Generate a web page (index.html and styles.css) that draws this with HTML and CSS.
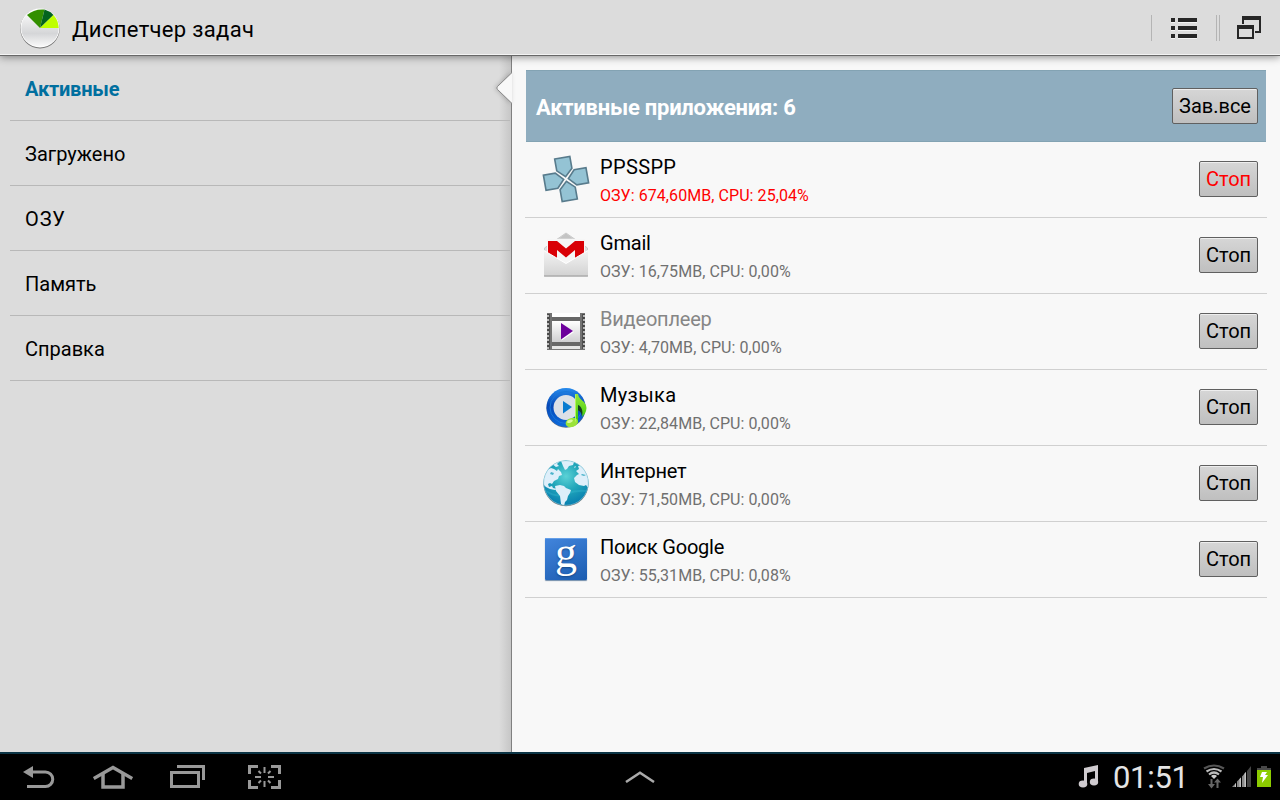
FILE: index.html
```
<!DOCTYPE html>
<html lang="ru">
<head>
    <meta charset="UTF-8">
    <meta name="viewport" content="width=device-width, initial-scale=1.0">
    <title>Диспетчер задач</title>
    <link rel="stylesheet" href="styles.css">
</head>
<body>
    <div class="screen">
        <header class="action-bar">
            <svg class="app-icon" width="44" height="44" viewBox="0 0 44 44">
                <defs>
                    <linearGradient id="disc" x1="0" y1="0" x2="0" y2="1">
                        <stop offset="0" stop-color="#fff"/>
                        <stop offset=".65" stop-color="#d5d6d8"/>
                        <stop offset="1" stop-color="#fafafa"/>
                    </linearGradient>
                </defs>
                <circle cx="22" cy="22.8" r="19.7" fill="#777"/>
                <circle cx="22" cy="22" r="19.5" fill="#fff"/>
                <circle cx="22" cy="22" r="18.7" fill="url(#disc)"/>
                <path d="M22 22L9 9Q16 2.700 26.500 3.500Z" fill="#338f00"/>
                <path d="M22 22L26.500 3.500Q32 5 35.500 9Z" fill="#04641e"/>
                <path d="M22 22L35.500 9Q40.500 14.500 40.700 22Z" fill="#bfff00"/>
            </svg>
            <h1 class="title">Диспетчер задач</h1>
            <div class="actions">
                <div class="action action-list">
                    <svg width="26" height="21" viewBox="0 0 26 21">
                        <path d="M0 4.500h4M7 4.500h19M0 12.500h4M7 12.500h19M0 20.500h4M7 20.500h19" stroke="#f4f4f4"/>
                        <path d="M0 0h4v4H0zM7 0h19v4H7zM0 8h4v4H0zM7 8h19v4H7zM0 16h4v4H0zM7 16h19v4H7z" fill="#262626"/>
                    </svg>
                </div>
                <div class="action action-windows">
                    <svg width="24" height="23" viewBox="0 0 24 23" fill="#262626">
                        <path d="M5 0h19v17h-6v-2h4V4H7v4H5z"/>
                        <path d="M0 9h17v14H0zM2 13v8h13v-8z" fill-rule="evenodd"/>
                    </svg>
                </div>
            </div>
        </header>

        <div class="content">
            <nav class="sidebar">
                <div class="menu-item selected">Активные</div>
                <div class="menu-item">Загружено</div>
                <div class="menu-item acronym">ОЗУ</div>
                <div class="menu-item">Память</div>
                <div class="menu-item">Справка</div>
                <svg class="pointer" width="17" height="34" viewBox="0 0 17 34">
                    <path d="M17 1.500L2.500 15.500Q1 17 2.500 18.500L17 32.500" fill="#f8f8f8" stroke="#858585"/>
                </svg>
            </nav>

            <main class="panel">
                <div class="panel-header">
                    <h2 class="panel-title">Активные приложения: 6</h2>
                    <button class="btn btn-all">Зав.все</button>
                </div>

                <div class="app-row">
                    <svg class="icon" width="48" height="48" viewBox="0 0 48 48">
                        <g transform="translate(24 24) scale(.96) rotate(-10) translate(-24 -24)" fill="#94c3d4" stroke="#587b8c" stroke-width="1.700">
                            <path d="M16 1.500h16V14L24 21.500L16 14Z"/>
                            <path d="M16 1.500h16V14L24 21.500L16 14Z" transform="rotate(90 24 24)"/>
                            <path d="M16 1.500h16V14L24 21.500L16 14Z" transform="rotate(180 24 24)"/>
                            <path d="M16 1.500h16V14L24 21.500L16 14Z" transform="rotate(270 24 24)"/>
                        </g>
                    </svg>
                    <div class="info">
                        <div class="name wide">PPSSPP</div>
                        <div class="usage alert">ОЗУ: 674,60MB, CPU: 25,04%</div>
                    </div>
                    <button class="btn alert">Стоп</button>
                </div>

                <div class="app-row">
                    <svg class="icon" width="48" height="48" viewBox="0 0 48 48">
                        <defs>
                            <linearGradient id="paper" x1="0" y1="0" x2="0" y2="1">
                                <stop offset="0" stop-color="#f4f4f4"/>
                                <stop offset="1" stop-color="#d2d2d2"/>
                            </linearGradient>
                        </defs>
                        <path d="M2.500 17L24 2L45.500 17V45H2.500Z" fill="#dedede" stroke="#cacaca"/>
                        <path d="M17 7.500L24 2.500L31 7.500Z" fill="#c4c4c4"/>
                        <path d="M5 8h38v25H5z" fill="#f6f6f6"/>
                        <path d="M6 10h9l9 7.500l9-7.500h9v17H33V19L24 26.500L15 19v8H6z" fill="#d90006"/>
                        <path d="M2 19.500L24 32.500L46 19.500V45H2Z" fill="url(#paper)"/>
                        <path d="M2 19.500L24 32.500L46 19.500" fill="none" stroke="#fff"/>
                        <path d="M2 45h44" stroke="#999"/>
                    </svg>
                    <div class="info">
                        <div class="name">Gmail</div>
                        <div class="usage">ОЗУ: 16,75MB, CPU: 0,00%</div>
                    </div>
                    <button class="btn">Стоп</button>
                </div>

                <div class="app-row">
                    <svg class="icon" width="48" height="48" viewBox="0 0 48 48">
                        <defs>
                            <linearGradient id="film" x1="0" y1="0" x2="0" y2="1">
                                <stop offset="0" stop-color="#fff"/>
                                <stop offset="1" stop-color="#cfcfd1"/>
                            </linearGradient>
                        </defs>
                        <path d="M10 6h28v4H10z" fill="#fff"/>
                        <path d="M5 6h5v37H5zM38 6h5v37h-5z" fill="#737373"/>
                        <path d="M10 10h28v4H10zM10 35h28v4H10z" fill="#686868"/>
                        <path d="M10 14h28v21H10z" fill="url(#film)"/>
                        <path d="M10 39h28v3H10z" fill="#e6e6e6"/>
                        <path d="M10 42.500h28" stroke="#777"/>
                        <path d="M6.500 7v35M41.500 7v35" stroke="#444" stroke-width="2.500"/>
                        <path d="M6 8v34M42 8v34" stroke="#ddd" stroke-width="1.500" stroke-dasharray="2 2"/>
                        <path d="M19.500 17.500L32 25L19.500 33.500Z" fill="#fff"/>
                        <path d="M19 16L31 24L19 32.500Z" fill="#6d009c"/>
                    </svg>
                    <div class="info">
                        <div class="name inactive">Видеоплеер</div>
                        <div class="usage">ОЗУ: 4,70MB, CPU: 0,00%</div>
                    </div>
                    <button class="btn">Стоп</button>
                </div>

                <div class="app-row">
                    <svg class="icon" width="48" height="48" viewBox="0 0 48 48">
                        <defs>
                            <linearGradient id="ring" x1="0" y1="0" x2="0" y2="1">
                                <stop offset="0" stop-color="#278bed"/>
                                <stop offset=".45" stop-color="#0749b7"/>
                                <stop offset="1" stop-color="#0c6bdd"/>
                            </linearGradient>
                            <linearGradient id="note" x1="0" y1="0" x2="0" y2="1">
                                <stop offset="0" stop-color="#9ae83a"/>
                                <stop offset="1" stop-color="#2fc805"/>
                            </linearGradient>
                        </defs>
                        <circle cx="24" cy="25.300" r="19.500" fill="#596c88"/>
                        <circle cx="24" cy="24.500" r="19.500" fill="url(#ring)"/>
                        <circle cx="24" cy="24.500" r="16" fill="none" stroke="#1977d9"/>
                        <circle cx="24" cy="24.500" r="12.500" fill="#dce0e7"/>
                        <path d="M21 18L30 24L21 30.500Z" fill="#087bd0"/>
                        <path d="M35 20c5 2 8 7 5 13c-1-4-2-5-5-6z" fill="#123d20"/>
                        <path d="M33 11h3c.5 6 8.500 7 8.500 14c0 3.500-2 6.500-4.500 9c1.500-6-.5-11-4-12v18h-3z" fill="url(#note)"/>
                        <ellipse cx="29.800" cy="39.500" rx="6.300" ry="4.500" fill="#9be33a" transform="rotate(-18 29.800 39.500)"/>
                        <ellipse cx="28" cy="38.300" rx="3" ry="1.500" fill="#dcfaa0" transform="rotate(-18 28 38.300)"/>
                        <path d="M33.500 11.500v27" stroke="#b5f25c"/>
                    </svg>
                    <div class="info">
                        <div class="name wide">Музыка</div>
                        <div class="usage">ОЗУ: 22,84MB, CPU: 0,00%</div>
                    </div>
                    <button class="btn">Стоп</button>
                </div>

                <div class="app-row">
                    <svg class="icon" width="48" height="48" viewBox="0 0 48 48">
                        <defs>
                            <radialGradient id="sea" cx=".5" cy=".35" r=".65">
                                <stop offset="0" stop-color="#5bd2d6"/>
                                <stop offset=".5" stop-color="#20a5b9"/>
                                <stop offset="1" stop-color="#087eb0"/>
                            </radialGradient>
                            <clipPath id="globe"><circle cx="24" cy="24" r="22.500"/></clipPath>
                        </defs>
                        <circle cx="24" cy="24.800" r="22.500" fill="#777"/>
                        <circle cx="24" cy="24" r="22.500" fill="url(#sea)"/>
                        <path d="M4 32Q14 39 24 35T44 32" fill="none" stroke="#38bad0" stroke-opacity=".35" stroke-width="2"/>
                        <g clip-path="url(#globe)" fill="#deeffa">
                            <path d="M1 18L5 11L9 9l3 1l3 2l1-2l3 3l1 3l-3 1l-1 3l-4 2l-2 3l-2-1l-2 1l1 3l3-1l1 2l4 1l-2 1l-5-1l-4-2l-3-3l-2 2z"/>
                            <path d="M19 2h5l2-1l6 2l-1 3l-4 1l-2 3l-2 1l-2-4z"/>
                            <path d="M10 5l4-3l3 1l-2 2l2 2l-3 1z"/>
                            <path d="M13 27l5-1l4 1l2 2l5 2l-1 3l-2 3l-1 4l-2 2l-1 4l-3-2l-1-8l-4-5z"/>
                            <path d="M34 12l3-2l-1-3l4-1l7 8v16l-3-4l-2 1l-5-1l-4-3l-1-4l3-3l2-1z"/>
                            <path d="M32 8l2-1l-1 2z"/>
                            <path d="M40 15l4 1l-2 1l-3-1zM9 13l3 1l-1 2l-3-1z" fill="#4bb3ca"/>
                        </g>
                        <circle cx="24" cy="24" r="22.300" fill="none" stroke="#8dcadb" stroke-opacity=".6"/>
                    </svg>
                    <div class="info">
                        <div class="name">Интернет</div>
                        <div class="usage">ОЗУ: 71,50MB, CPU: 0,00%</div>
                    </div>
                    <button class="btn">Стоп</button>
                </div>

                <div class="app-row">
                    <div class="icon">
                        <div class="google-tile">g</div>
                    </div>
                    <div class="info">
                        <div class="name">Поиск Google</div>
                        <div class="usage">ОЗУ: 55,31MB, CPU: 0,08%</div>
                    </div>
                    <button class="btn">Стоп</button>
                </div>
            </main>
        </div>

        <footer class="system-bar">
            <div class="nav-buttons">
                <svg width="32" height="22" viewBox="0 0 32 22">
                    <path d="M9 6H22.500A7.200 7.200 0 0 1 22.500 20.500H4" fill="none" stroke="#999" stroke-width="3"/>
                    <path d="M0 6L10 0V12Z" fill="#999"/>
                </svg>
                <svg width="40" height="24" viewBox="0 0 40 24" fill="none" stroke="#999">
                    <path d="M.7 13.500L20 2.500L39.300 13.500" stroke-width="3.500"/>
                    <path d="M10 9V22H30V9" stroke-width="3.500"/>
                </svg>
                <svg width="35" height="23" viewBox="0 0 35 23" fill="none" stroke="#999">
                    <path d="M7 1.500H33.500V15" stroke-width="3"/>
                    <path d="M1.500 7.500H28.500V21.500H1.500Z" stroke-width="3"/>
                </svg>
                <svg width="33" height="24" viewBox="0 0 33 24" fill="none" stroke="#999">
                    <path d="M1.500 9V1.500H10M23 1.500H31.500V9M31.500 15V22.500H23M10 22.500H1.500V15" stroke-width="3"/>
                    <path d="M16.500 2v6M16.500 16v6M7 12h6M20 12h6" stroke-width="2"/>
                    <path d="M10.500 6l2.500 2.500M22.500 6L20 8.500M10.500 18l2.500-2.500M22.500 18L20 15.500" stroke-width="2"/>
                </svg>
            </div>
            <svg class="tray-arrow" width="30" height="12" viewBox="0 0 30 12">
                <path d="M1 11L15 1.700L29 11" fill="none" stroke="#aaa" stroke-width="2.500"/>
            </svg>
            <div class="status">
                <svg class="music" width="21" height="23" viewBox="0 0 21 23" fill="#cfcbcf">
                    <path d="M6 3L20 0V17H17V6L9 8V19H6Z"/>
                    <ellipse cx="5" cy="19" rx="4.300" ry="3.400"/>
                    <ellipse cx="16" cy="17" rx="4.200" ry="3.400"/>
                </svg>
                <div class="clock">01:51</div>
                <svg class="wifi" width="22" height="25" viewBox="0 0 22 25" fill="none" stroke-width="2.200">
                    <path d="M1 4.500Q11-1.500 21 4.500" stroke="#555"/>
                    <path d="M3.500 7.500Q11 2.500 18.500 7.500M6 10.500Q11 6.500 16 10.500" stroke="#bbb"/>
                    <path d="M8 12Q11 9.500 14 12L11 15Z" fill="#ccc"/>
                    <path d="M8.500 15V22M14.500 24V17" stroke="#666" stroke-width="2"/>
                    <path d="M5 20h7L8.500 24.500ZM11 18.500h7L14.500 14.500Z" fill="#666"/>
                </svg>
                <svg class="signal" width="19" height="21" viewBox="0 0 19 21">
                    <path d="M0 21L4 17V21ZM5 21V15.500L9 11.500V21ZM10 21V10.500L14 6V21Z" fill="#888"/>
                    <path d="M3 21V18L4 17V21ZM7.500 21V13L9 11.500V21ZM12.500 21V7.500L14 6V21Z" fill="#c4c4c4"/>
                    <path d="M15 21V5L19 0V21Z" fill="#444"/>
                </svg>
                <svg class="battery" width="14" height="21" viewBox="0 0 14 21">
                    <path d="M4 0h6v2h4v3H0V2h4z" fill="#484848"/>
                    <path d="M0 4h14v17H0z" fill="#8ccc00"/>
                    <path d="M5 6h5L8 9h3L5 17l1-6H3z" fill="#fff"/>
                </svg>
            </div>
        </footer>
    </div>
</body>
</html>
```
FILE: styles.css
```
* {
    margin: 0;
    padding: 0;
    box-sizing: border-box;
    font-family: Roboto, 'Noto Sans', sans-serif;
}

body {
    background-color: #f8f8f8;
    color: #000;
}

svg {
    display: block;
    flex-shrink: 0;
}

.screen {
    width: 1280px;
    height: 800px;
    display: flex;
    flex-direction: column;
    overflow: hidden;
}

/* Top bar */
.action-bar {
    height: 56px;
    flex-shrink: 0;
    display: flex;
    align-items: center;
    padding-left: 18px;
    background-color: #dcdcdc;
    border-bottom: 1px solid #686868;
    box-shadow: inset 0 -1px #f4f4f4, 0 1px 8px rgba(0, 0, 0, 0.45);
    z-index: 1;
}

.title {
    font-size: 22px;
    font-weight: 400;
    letter-spacing: 0.33px;
    margin: 3px 0 0 10px;
}

.actions {
    display: flex;
    margin-left: auto;
    height: 26px;
}

.action {
    display: flex;
    align-items: center;
    border-left: 1px solid #b4b4b4;
}

.action-list {
    width: 66px;
    padding: 1px 0 0 19px;
    border-right: 1px solid #b4b4b4;
}

.action-windows {
    width: 61px;
    margin-left: 2px;
    padding-left: 17px;
}

.content {
    flex: 1;
    display: flex;
}

/* Left menu */
.sidebar {
    position: relative;
    width: 512px;
    padding: 0 1px 0 10px;
    background: linear-gradient(to left, #c6c6c6, #dcdcdc 12px);
    border-right: 1px solid #808080;
}

.menu-item {
    height: 65px;
    padding: 2px 15px 0;
    line-height: 62px;
    font-size: 20px;
    border-bottom: 1px solid #b8b8b8;
}

.menu-item.selected {
    color: #006f9f;
    font-weight: 700;
    letter-spacing: -0.2px;
}

.menu-item.acronym {
    letter-spacing: 0.9px;
}

.pointer {
    position: absolute;
    top: 15px;
    right: -1px;
    filter: drop-shadow(-1px 0 2px rgba(0, 0, 0, 0.2));
}

/* Application list */
.panel {
    flex: 1;
    padding: 14px 13px 0;
    background-color: #f8f8f8;
}

.panel-header {
    height: 72px;
    display: flex;
    align-items: center;
    justify-content: space-between;
    margin: 0 1px;
    padding: 0 8px 0 10px;
    background-color: #8fadbf;
    border: 1px solid #83a3b3;
    border-width: 1px 0;
}

.panel-title {
    color: #fff;
    font-size: 22px;
    font-weight: 700;
    letter-spacing: -0.24px;
    padding-top: 3px;
}

.app-row {
    height: 76px;
    display: flex;
    align-items: center;
    padding: 0 9px 1px 17px;
    border-bottom: 1px solid #d0d0d0;
}

.icon {
    width: 48px;
    height: 48px;
    flex-shrink: 0;
}

.google-tile {
    width: 42px;
    height: 42px;
    margin: 3px;
    background: linear-gradient(155deg, #4285dc, #1b5cb0);
    border-radius: 1px;
    box-shadow: inset 0 1px #659fe8, 0 1px 1px #718caa;
    color: #fff;
    font-family: 'Liberation Serif', serif;
    font-size: 44px;
    line-height: 30px;
    text-align: center;
    text-shadow: 0 1px 2px #174785;
}

.info {
    flex: 1;
    margin-left: 10px;
    padding-top: 4px;
}

.name {
    font-size: 20px;
    line-height: 26px;
    letter-spacing: -0.2px;
}

.name.wide {
    letter-spacing: 0.35px;
}

.name.inactive {
    color: #868686;
}

.usage {
    margin-top: 3px;
    font-size: 16px;
    line-height: 26px;
    letter-spacing: 0.07px;
    color: #707070;
}

.btn {
    width: 59px;
    height: 36px;
    font-size: 20px;
    color: #000;
    background: linear-gradient(#d6d6d6, #bfbfbf);
    border: 1px solid #606060;
    border-radius: 2px;
    box-shadow: inset 0 1px #eee;
}

.btn-all {
    width: 86px;
}

.info .alert,
.btn.alert {
    color: #f00;
}

/* Bottom system bar */
.system-bar {
    height: 48px;
    flex-shrink: 0;
    display: grid;
    grid-template-columns: 1fr 30px 1fr;
    align-items: center;
    padding-bottom: 1px;
    background-color: #000;
    border-top: 2px solid #0b3445;
}

.nav-buttons {
    display: flex;
    align-items: center;
    padding-left: 23px;
}

.nav-buttons svg:nth-child(2) {
    margin-left: 38px;
}

.nav-buttons svg:nth-child(3) {
    margin-left: 37px;
}

.nav-buttons svg:nth-child(4) {
    margin-left: 43px;
}

.status {
    display: flex;
    align-items: center;
    justify-content: flex-end;
    padding-right: 9px;
}

.clock {
    width: 75px;
    margin: 3px 15px 0 14px;
    color: #e4e4e4;
    font-size: 31px;
    line-height: 40px;
    letter-spacing: -0.3px;
}

.wifi {
    margin-right: 7px;
}

.signal {
    margin-right: 6px;
}
```
